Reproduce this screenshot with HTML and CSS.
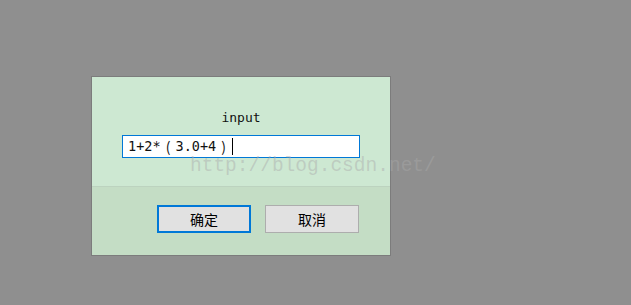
FILE: index.html
```html
<!DOCTYPE html>
<html lang="zh-CN">
<head>
  <meta charset="UTF-8" />
  <title>input</title>
  <link rel="stylesheet" href="styles.css">
</head>
<body>
  <div class="dialog">
    <div class="dialog-body">
      <div class="prompt">input</div>
      <div class="field">1+2*<span class="wide">(</span>3.0+4<span class="wide">)</span><span class="caret"></span></div>
    </div>
    <div class="dialog-footer">
      <button class="btn btn-primary">确定</button>
      <button class="btn">取消</button>
    </div>
    <div class="watermark">http://blog.csdn.net/</div>
  </div>
</body>
</html>
```

FILE: styles.css
```css
body {
  margin: 0;
  padding: 76px 0 0 91px;
  background: #8f8f8f;
  font-family: "DejaVu Sans Mono", "Noto Sans CJK SC", monospace;
}

.dialog {
  position: relative;
  width: 298px;
  border: 1px solid #7c7c7c;
  background: #cde8d2;
}

.dialog-body {
  height: 110px;
  display: flex;
  flex-direction: column;
  align-items: center;
  box-sizing: border-box;
  padding-top: 33px;
  border-bottom: 1px solid #bcd3bf;
}

.prompt {
  font-size: 13px;
  line-height: 16px;
  color: #111;
}

.field {
  margin-top: 9px;
  width: 238px;
  height: 23px;
  box-sizing: border-box;
  border: 1px solid #0078d7;
  background: #fff;
  padding: 0 4px 0 5px;
  font-size: 13.5px;
  line-height: 21px;
  color: #111;
  display: flex;
  align-items: center;
  white-space: pre;
}

.wide {
  display: inline-block;
  width: 15px;
  text-align: center;
  font-family: "Noto Sans CJK SC", sans-serif;
  font-size: 14px;
}

.caret {
  display: inline-block;
  width: 1px;
  height: 17px;
  margin-left: 1px;
  background: #000;
}

.dialog-footer {
  height: 68px;
  background: #c4ddc5;
  display: flex;
  gap: 14px;
  box-sizing: border-box;
  padding: 18px 0 0 65px;
}

.btn {
  width: 94px;
  height: 28px;
  box-sizing: border-box;
  border: 1px solid #adadad;
  background: #e1e1e1;
  font-family: "Noto Sans CJK SC", sans-serif;
  font-size: 14px;
  color: #000;
  padding: 0;
}

.btn-primary {
  border: 2px solid #0078d7;
}

.watermark {
  position: absolute;
  left: 98px;
  top: 78px;
  font-family: "Liberation Mono", monospace;
  font-size: 19.5px;
  color: rgba(170, 170, 170, 0.45);
  white-space: nowrap;
  pointer-events: none;
}
```
